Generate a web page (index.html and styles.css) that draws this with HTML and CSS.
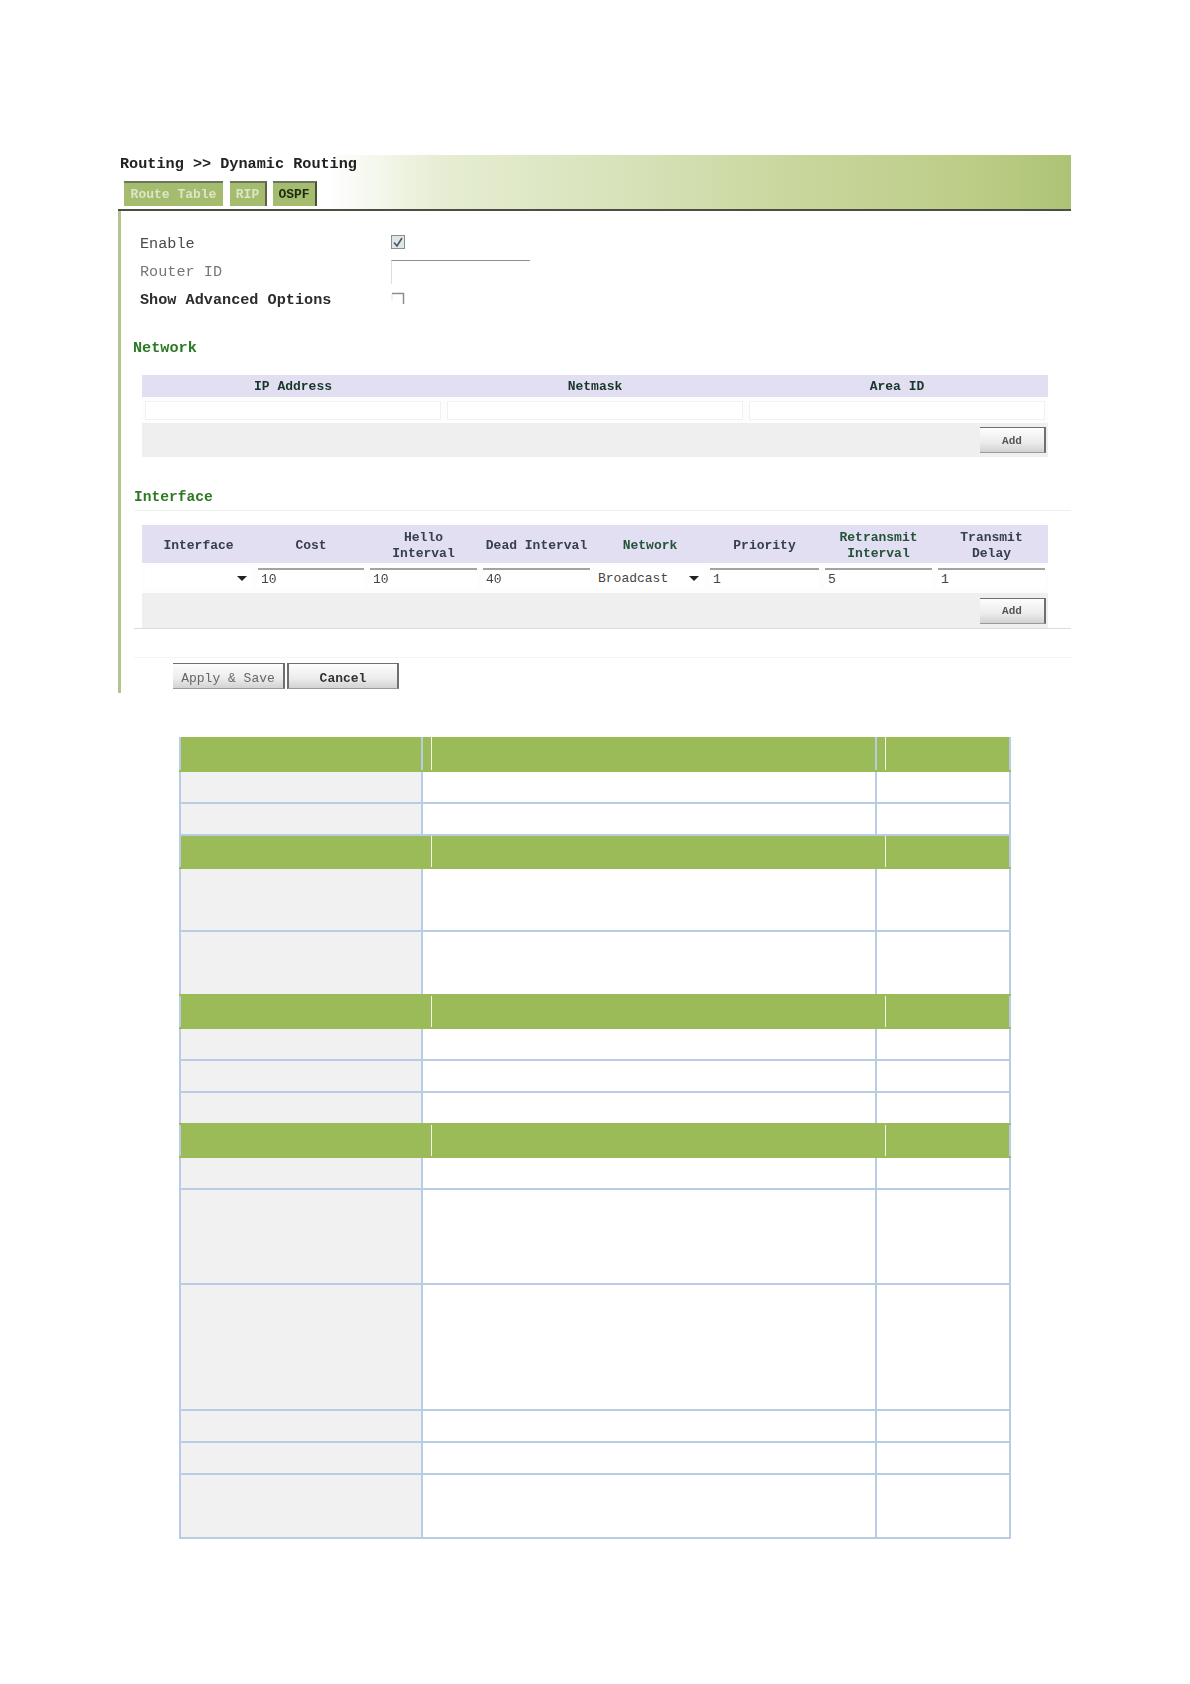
FILE: index.html
```html
<!DOCTYPE html>
<html lang="en">
<head>
<meta charset="utf-8">
<title>Dynamic Routing</title>
<link rel="stylesheet" href="styles.css">
</head>
<body>
<section class="shot">
  <header class="bar">
    <div class="crumb">Routing &gt;&gt; Dynamic Routing</div>
    <nav class="tabs">
      <a class="tab tab-route">Route Table</a>
      <a class="tab tab-rip">RIP</a>
      <a class="tab tab-ospf">OSPF</a>
    </nav>
  </header>
  <main class="panel">
    <div class="form">
      <div class="lbl lbl-soft">Enable</div>
      <div class="ctl">
        <svg class="chk" viewBox="0 0 14 14" aria-hidden="true"><rect x="0.5" y="0.5" width="13" height="13" fill="#dfe6e8" stroke="#8a8f94"/><path d="M3 7.5 L6 11 L11 3" fill="none" stroke="#4b5560" stroke-width="1.6"/></svg>
      </div>
      <div class="lbl lbl-faint">Router ID</div>
      <div class="ctl"><input class="rid" type="text"></div>
      <div class="lbl lbl-strong">Show Advanced Options</div>
      <div class="ctl">
        <svg class="chk" viewBox="0 0 14 14" aria-hidden="true"><path d="M1 2.5 H12.5 V13" fill="none" stroke="#8a8f8a" stroke-width="1.5"/><path d="M1 3 V10" fill="none" stroke="#e2e2e2"/></svg>
      </div>
    </div>

    <h2 class="sec sec-net">Network</h2>
    <div class="tbl tbl-3">
      <div class="th">IP Address</div>
      <div class="th">Netmask</div>
      <div class="th">Area ID</div>
      <div class="td"><input class="inp inp-flat" type="text"></div>
      <div class="td"><input class="inp inp-flat" type="text"></div>
      <div class="td"><input class="inp inp-flat" type="text"></div>
      <div class="foot foot-3"><button class="btn btn-add">Add</button></div>
    </div>

    <h2 class="sec sec-if">Interface</h2>
    <div class="tbl tbl-8">
      <div class="th th-soft">Interface</div>
      <div class="th th-soft">Cost</div>
      <div class="th th-soft">Hello<br>Interval</div>
      <div class="th th-soft">Dead Interval</div>
      <div class="th th-green">Network</div>
      <div class="th th-soft">Priority</div>
      <div class="th th-green">Retransmit<br>Interval</div>
      <div class="th th-soft">Transmit<br>Delay</div>
      <div class="td"><div class="sel"><span></span><i class="caret"></i></div></div>
      <div class="td"><input class="inp" type="text" value="10"></div>
      <div class="td"><input class="inp" type="text" value="10"></div>
      <div class="td"><input class="inp" type="text" value="40"></div>
      <div class="td"><div class="sel"><span>Broadcast</span><i class="caret"></i></div></div>
      <div class="td"><input class="inp" type="text" value="1"></div>
      <div class="td"><input class="inp" type="text" value="5"></div>
      <div class="td"><input class="inp" type="text" value="1"></div>
      <div class="foot foot-8"><button class="btn btn-add">Add</button></div>
    </div>
    <div class="rule"></div>
    <div class="rule rule-faint"></div>
    <div class="actions">
      <button class="btn btn-act">Apply &amp; Save</button>
      <button class="btn btn-act">Cancel</button>
    </div>
  </main>
</section>

<section class="spec">
  <div class="head head-lines head-first"><div class="hc hc-a"></div><div class="hc hc-b"></div><div class="hc hc-c"></div></div>
  <div class="row r30"><div></div><div></div><div></div></div>
  <div class="row r30"><div></div><div></div><div></div></div>
  <div class="head head-second"><div class="hc hc-a"></div><div class="hc hc-b"></div><div class="hc hc-c"></div></div>
  <div class="row r61"><div></div><div></div><div></div></div>
  <div class="row r62 row-open"><div></div><div></div><div></div></div>
  <div class="head"><div class="hc hc-a"></div><div class="hc hc-b"></div><div class="hc hc-c"></div></div>
  <div class="row r30"><div></div><div></div><div></div></div>
  <div class="row r30"><div></div><div></div><div></div></div>
  <div class="row r30b row-open"><div></div><div></div><div></div></div>
  <div class="head"><div class="hc hc-a"></div><div class="hc hc-b"></div><div class="hc hc-c"></div></div>
  <div class="row r30"><div></div><div></div><div></div></div>
  <div class="row r93"><div></div><div></div><div></div></div>
  <div class="row r124"><div></div><div></div><div></div></div>
  <div class="row r30"><div></div><div></div><div></div></div>
  <div class="row r30"><div></div><div></div><div></div></div>
  <div class="row r62"><div></div><div></div><div></div></div>
</section>
</body>
</html>
```

FILE: styles.css
```css
* { box-sizing: border-box; }
html, body { margin: 0; padding: 0; background: #fff; }
body { padding-top: 155px; height: 1684px; overflow: hidden; font-family: "Liberation Mono", monospace; }

/* captured router UI */
.shot { width: 953px; height: 538px; margin-left: 118px; overflow: hidden; filter: blur(0.7px); }
.bar { height: 56px; border-bottom: 2px solid #4a4f44; background: linear-gradient(90deg, #fff 0%, #fff 22%, #e6edd2 34%, #d8e3bb 52%, #c8d69c 72%, #bccd86 90%, #acc375 100%); }
.crumb { margin-left: 2px; height: 18px; line-height: 18px; font-size: 15.2px; font-weight: bold; color: #222; }
.tabs { display: flex; margin: 8px 0 0 6px; }
.tab { height: 25px; line-height: 24px; text-align: center; font-size: 13px; font-weight: bold; color: #dbe6c6; background: #a5bb6e; border-top: 2px solid #6b7560; }
.tab-route { width: 99px; }
.tab-rip { width: 37px; margin-left: 7px; border-right: 2px solid #59624a; }
.tab-ospf { width: 44px; margin-left: 6px; color: #1d2a14; border-right: 2px solid #46503a; }

.panel { height: 482px; border-left: 3px solid #b5c48c; display: flow-root; }

.form { display: grid; grid-template-columns: 251px 1fr; grid-auto-rows: 28px; margin: 19px 0 0 19px; }
.lbl { font-size: 15.2px; line-height: 28px; white-space: nowrap; }
.lbl-soft { color: #4a4a4a; }
.lbl-faint { color: #777; }
.lbl-strong { color: #2c2c2c; font-weight: bold; }
.ctl { display: flex; align-items: center; }
.chk { width: 14px; height: 14px; display: block; margin-bottom: 5px; }
.rid { align-self: flex-start; margin-top: 2px; width: 139px; height: 24px; padding: 0; background: #fff; border: 0; border-top: 1px solid #8d8f8d; border-left: 1px solid #dedede; }

.sec { margin: 0; font-size: 15.2px; line-height: 18px; font-weight: bold; color: #2c7a22; }
.sec-net { margin: 25px 0 0 12px; }
.sec-if { margin: 31px 0 0 13px; padding-bottom: 4px; border-bottom: 1px solid #f1f1ec; font-size: 14.6px; }

.tbl { display: grid; width: 906px; margin-left: 21px; }
.tbl-3 { grid-template-columns: repeat(3, 1fr); grid-template-rows: 22px 26px 34px; margin-top: 18px; }
.tbl-8 { grid-template-columns: 113px 112px 113px 113px 114px 115px 113px 113px; grid-template-rows: 38px 30px 35px; margin-top: 14px; }
.th { display: flex; align-items: center; justify-content: center; text-align: center; padding-top: 2px; background: #e3dff2; font-size: 13px; line-height: 16px; font-weight: bold; color: #17352a; white-space: nowrap; }
.tbl-8 .th { padding-top: 3px; }
.th-soft { color: #35404a; }
.th-green { color: #245238; }
.td { display: flex; align-items: center; padding: 0 3px; background: #fdfdfd; }
.inp { width: 100%; min-width: 0; height: 20px; padding: 0 3px; margin: 0; background: #fff; border: 0; border-top: 2px solid #a2a4a2; font-family: "Liberation Mono", monospace; font-size: 13px; color: #444; }
.inp-flat { border: 1px solid #f1f1ee; height: 19px; }
.sel { flex: 1; height: 22px; display: flex; align-items: center; justify-content: space-between; padding: 0 5px 0 2px; font-size: 13px; color: #444; background: #fff; }
.caret { width: 0; height: 0; border-left: 5px solid transparent; border-right: 5px solid transparent; border-top: 5px solid #222; }
.foot { display: flex; justify-content: flex-end; align-items: center; padding-right: 2px; background: #efefef; }
.foot-3 { grid-column: 1 / span 3; }
.foot-8 { grid-column: 1 / span 8; }

.btn { font-family: "Liberation Mono", monospace; padding: 1px 0 0; height: 26px; background: linear-gradient(180deg, #fdfdfd 0%, #ececec 60%, #d2d2d2 100%); border: 0; border-top: 1px solid #6f6f6f; border-right: 2px solid #6f6f6f; border-bottom: 1px solid #9a9a9a; color: #555; font-size: 13px; font-weight: bold; }
.btn-add { width: 66px; font-size: 11px; }
.btn-act { width: 112px; height: 26px; padding-top: 4px; color: #666; font-weight: normal; }
.btn-act + .btn-act { margin-left: 2px; border-left: 2px solid #6f6f6f; color: #333; font-weight: bold; }

.rule { height: 1px; margin-left: 13px; background: #dcdcd8; }
.rule-faint { margin-top: 28px; background: #f3f3f0; }
.actions { display: flex; margin: 5px 0 0 52px; }

/* feature table */
.spec { width: 832px; margin: 44px 0 0 179px; }
.head { display: flex; height: 35px; padding: 2px 0; background: #9bbb59; }
.head-first { padding-top: 0; height: 35px; }
.head-second { padding-top: 0; height: 33px; }
.hc { height: 100%; }
.hc-a { width: 253px; border-left: 2px solid #b8cce4; border-right: 1px solid #f4f6ea; }
.hc-b { width: 454px; border-right: 1px solid #f4f6ea; }
.hc-c { width: 125px; border-right: 2px solid #b8cce4; }
.head-lines .hc-a { background: linear-gradient(#b8cce4, #b8cce4) no-repeat 240px 0 / 2px 100%; }
.head-lines .hc-b { background: linear-gradient(#b8cce4, #b8cce4) no-repeat 443px 0 / 2px 100%; }

.row { display: grid; grid-template-columns: 244px 454px 134px; border-bottom: 2px solid #b8cce4; }
.row > div:nth-child(1) { background: #f1f1f2; border-left: 2px solid #b8cce4; border-right: 2px solid #b8cce4; }
.row > div:nth-child(2) { background: #fff; border-right: 2px solid #b8cce4; }
.row > div:nth-child(3) { background: #fff; border-right: 2px solid #b8cce4; }
.row-open { border-bottom: 0; }
.r30 { height: 32px; }
.r30b { height: 30px; }
.r61 { height: 63px; }
.r62 { height: 62px; }
.r93 { height: 95px; }
.r124 { height: 126px; }
.row.r62:last-child { height: 64px; }
```
